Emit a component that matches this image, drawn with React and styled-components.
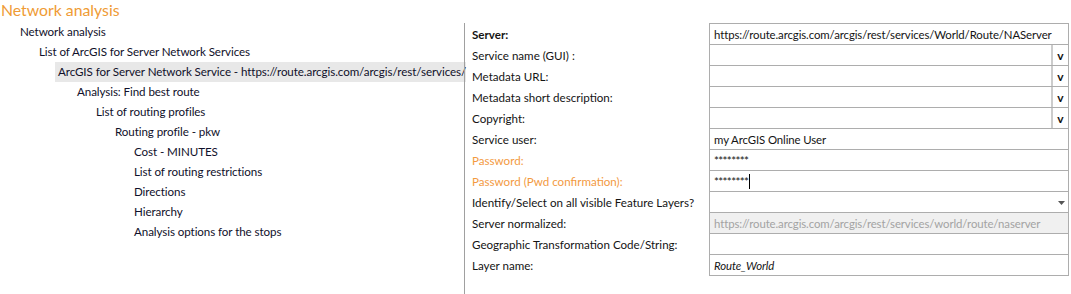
import React from 'react';
import styled, { createGlobalStyle } from 'styled-components';

const GlobalStyle = createGlobalStyle`
  html, body {
    margin: 0;
    padding: 0;
    background: #ffffff;
  }
  body {
    font-family: Lato, "Liberation Sans", sans-serif;
    font-size: 11.6px;
    color: #111111;
  }
`;

const treeItems = [
  { text: 'Network analysis', level: 0 },
  { text: 'List of ArcGIS for Server Network Services', level: 1 },
  {
    text: 'ArcGIS for Server Network Service - https://route.arcgis.com/arcgis/rest/services/',
    level: 2,
    selected: true,
  },
  { text: 'Analysis: Find best route', level: 3 },
  { text: 'List of routing profiles', level: 4 },
  { text: 'Routing profile - pkw', level: 5 },
  { text: 'Cost - MINUTES', level: 6 },
  { text: 'List of routing restrictions', level: 6 },
  { text: 'Directions', level: 6 },
  { text: 'Hierarchy', level: 6 },
  { text: 'Analysis options for the stops', level: 6 },
];

const formRows = [
  { label: 'Server:', bold: true, value: 'https://route.arcgis.com/arcgis/rest/services/World/Route/NAServer' },
  { label: 'Service name (GUI) :', button: true },
  { label: 'Metadata URL:', button: true },
  { label: 'Metadata short description:', button: true },
  { label: 'Copyright:', button: true },
  { label: 'Service user:', value: 'my ArcGIS Online User' },
  { label: 'Password:', warn: true, value: '********', secret: true },
  { label: 'Password (Pwd confirmation):', warn: true, value: '********', secret: true, caret: true },
  { label: 'Identify/Select on all visible Feature Layers?', select: true },
  { label: 'Server normalized:', disabled: true, value: 'https://route.arcgis.com/arcgis/rest/services/world/route/naserver' },
  { label: 'Geographic Transformation Code/String:' },
  { label: 'Layer name:', italic: true, value: 'Route_World' },
];

function App() {
  return (
    <>
      <GlobalStyle />
      <Page>
        <Title>Network analysis</Title>
        <Body>
          <Tree>
            {treeItems.map((item) => (
              <TreeRow key={item.text} $level={item.level} $selected={item.selected}>
                <span>{item.text}</span>
              </TreeRow>
            ))}
          </Tree>
          <Form>
            {formRows.map((row) => (
              <FormRow key={row.label}>
                <Label $bold={row.bold} $warn={row.warn}>
                  {row.label}
                </Label>
                <Field $disabled={row.disabled}>
                  <Value $italic={row.italic} $secret={row.secret} $disabled={row.disabled}>
                    {row.value}
                    {row.caret && <Caret />}
                  </Value>
                  {row.button && <MoreButton>v</MoreButton>}
                  {row.select && (
                    <SelectArrow>
                      <svg width="7" height="4" viewBox="0 0 7 4">
                        <path d="M0 0h7L3.5 4z" fill="#555" />
                      </svg>
                    </SelectArrow>
                  )}
                </Field>
              </FormRow>
            ))}
          </Form>
        </Body>
      </Page>
    </>
  );
}

const Page = styled.div`
  width: 1071px;
  height: 294px;
  overflow: hidden;
`;

const Title = styled.div`
  height: 22px;
  padding-left: 1px;
  font-size: 15.8px;
  line-height: 20px;
  color: #ef9b35;
`;

const Body = styled.div`
  display: flex;
  align-items: flex-start;
`;

const Tree = styled.div`
  width: 464px;
  flex: none;
  display: flex;
  flex-direction: column;
`;

const TreeRow = styled.div`
  height: 20px;
  display: flex;
  align-items: center;
  padding-left: ${(p) => 20 + p.$level * 19}px;

  span {
    display: flex;
    align-items: center;
    height: 20px;
    margin-left: -3px;
    padding-left: 3px;
    padding-bottom: 1px;
    box-sizing: border-box;
    flex: 1;
    background: ${(p) => (p.$selected ? '#e8e8e8' : 'transparent')};
    color: #10102a;
    letter-spacing: -0.08px;
    white-space: nowrap;
  }
`;

const Form = styled.div`
  flex: 1;
  margin-top: 1px;
  height: 271px;
  border-left: 1px solid #a0a0a0;
  display: flex;
  flex-direction: column;
`;

const FormRow = styled.div`
  display: grid;
  grid-template-columns: 244px 360px;
  height: 21px;
  flex: none;
`;

const Label = styled.div`
  padding-left: 7px;
  padding-top: 2px;
  display: flex;
  align-items: center;
  white-space: nowrap;
  font-weight: ${(p) => (p.$bold ? 700 : 400)};
  color: ${(p) => (p.$warn ? '#f39a3f' : '#141414')};
`;

const Field = styled.div`
  height: 22px;
  margin-bottom: -1px;
  box-sizing: border-box;
  border: 1px solid #adadad;
  display: flex;
  align-items: stretch;
  background: ${(p) => (p.$disabled ? '#f0f0f0' : '#ffffff')};
`;

const Value = styled.div`
  flex: 1;
  display: flex;
  align-items: center;
  padding-left: 4px;
  white-space: nowrap;
  overflow: hidden;
  font-style: ${(p) => (p.$italic ? 'italic' : 'normal')};
  font-size: ${(p) => (p.$secret ? '11.5px' : '11.4px')};
  letter-spacing: ${(p) => (p.$secret ? '-0.6px' : '-0.1px')};
  padding-top: ${(p) => (p.$secret ? '1px' : '0')};
  color: ${(p) => (p.$disabled ? '#a3a3a3' : '#141414')};
`;

const Caret = styled.span`
  width: 1px;
  height: 15px;
  background: #000;
  margin-left: 1px;
`;

const MoreButton = styled.div`
  width: 15px;
  border-left: 2px solid #cccccc;
  display: flex;
  align-items: center;
  justify-content: center;
  font-weight: 700;
  font-size: 12px;
  color: #111;
`;

const SelectArrow = styled.div`
  width: 14px;
  display: flex;
  align-items: center;
  justify-content: center;
  padding-top: 1px;
`;

export default App;
